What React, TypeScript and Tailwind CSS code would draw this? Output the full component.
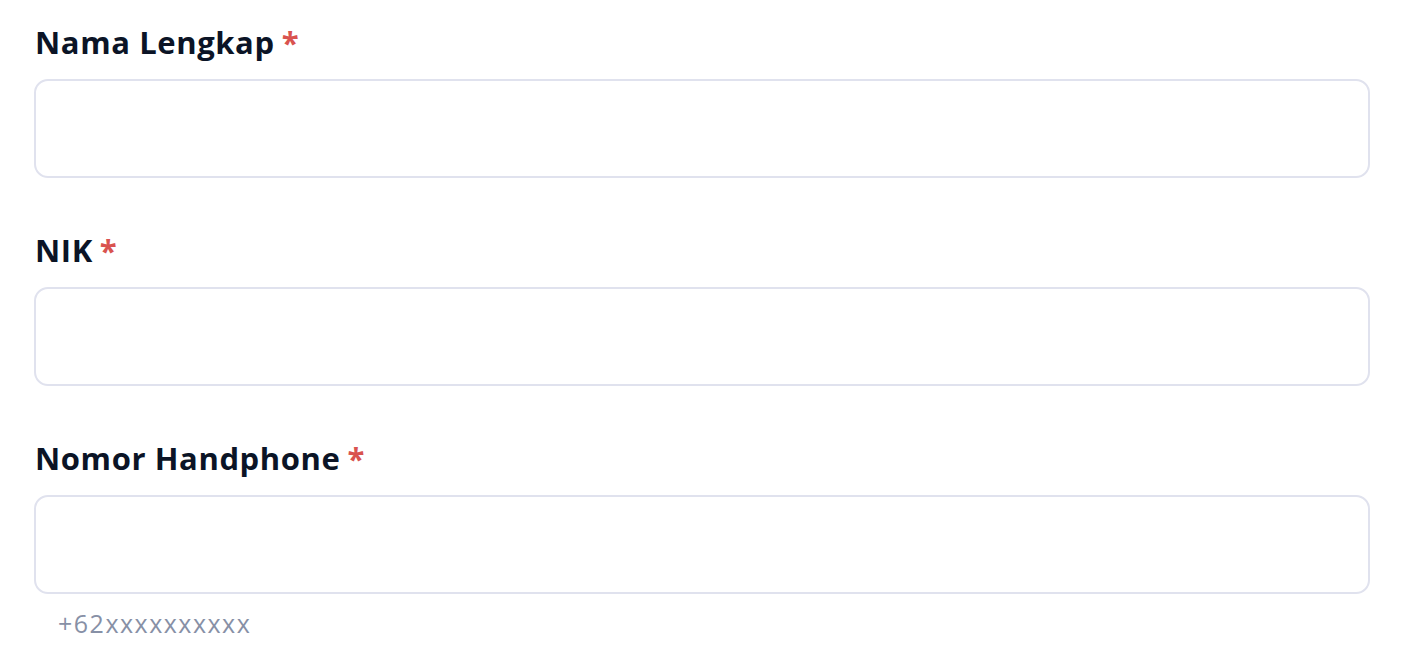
import React from "react";

const fields = [
  { label: "Nama Lengkap", hint: "" },
  { label: "NIK", hint: "" },
  { label: "Nomor Handphone", hint: "+62xxxxxxxxxx" },
];

export default function App() {
  return (
    <main
      className="min-h-screen bg-white pl-[34px] pr-[44px] pt-[21px]"
      style={{ fontFamily: '"Open Sans", "Noto Sans", sans-serif' }}
    >
      <div className="flex flex-col gap-[51px]">
        {fields.map((f) => (
          <div key={f.label} className="flex flex-col">
            <label className="flex items-baseline gap-[7px] pl-px text-[31px] leading-[42px] font-bold tracking-[0.6px] text-[#0b1426]">
              {f.label}
              <span className="text-[#d9534f]">*</span>
            </label>
            <input
              type="text"
              className="mt-[16px] h-[99px] w-full rounded-[14px] border-2 border-[#e0e2ee] bg-white px-6 text-[24px] focus:outline-none"
            />
            {f.hint && (
              <p className="mt-[13px] pl-[24px] text-[25px] leading-[32px] tracking-[1.5px] text-[#8790a6]">
                {f.hint}
              </p>
            )}
          </div>
        ))}
      </div>
    </main>
  );
}
